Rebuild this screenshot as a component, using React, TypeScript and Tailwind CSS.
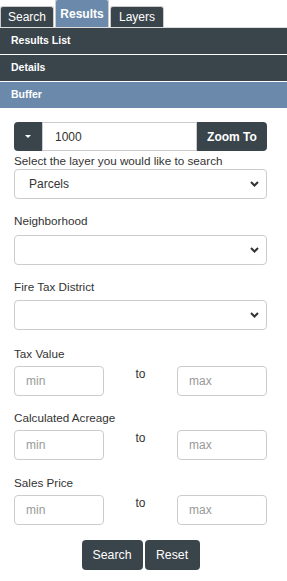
import { useState } from "react";

const DARK = "bg-[#3a444b]";

const font = { fontFamily: '"Liberation Sans", Arial, sans-serif' };

function Chevron() {
  return (
    <svg
      className="pointer-events-none absolute right-[8px] top-1/2 -translate-y-1/2"
      width="9"
      height="6"
      viewBox="0 0 9 6"
    >
      <path d="M1 1l3.5 3.5L8 1" fill="none" stroke="#333" strokeWidth="2" />
    </svg>
  );
}

function SelectBox({ value, options }: { value: string; options: string[] }) {
  return (
    <div className="relative">
      <select
        defaultValue={value}
        className="h-[30px] w-full appearance-none rounded-[4px] border border-[#ccc] bg-white pl-[14px] text-[12px] text-[#333] outline-none"
      >
        {options.map((o) => (
          <option key={o}>{o}</option>
        ))}
      </select>
      <Chevron />
    </div>
  );
}

function Label({ children }: { children: string }) {
  return <div className="h-[17px] text-[11.7px] leading-[17px] text-[#333]">{children}</div>;
}

function RangeRow({ label, className }: { label: string; className: string }) {
  return (
    <div className={className}>
      <Label>{label}</Label>
      <div className="mt-[4px] flex">
        <input
          placeholder="min"
          className="h-[30px] w-[90px] rounded-[4px] border border-[#ccc] pl-[11px] text-[12px] text-[#333] outline-none placeholder:text-[#999]"
        />
        <div className="flex-1 text-center text-[12px] leading-[17px] text-[#333]">to</div>
        <input
          placeholder="max"
          className="h-[30px] w-[90px] rounded-[4px] border border-[#ccc] pl-[11px] text-[12px] text-[#333] outline-none placeholder:text-[#999]"
        />
      </div>
    </div>
  );
}

export default function App() {
  const [tab, setTab] = useState("Results");
  const [dist, setDist] = useState("1000");

  return (
    <div className="h-[581px] w-[287px] bg-white" style={font}>
      {/* Tabs */}
      <div className="flex h-[28px] items-end gap-[1px] border-b border-[#ddd]">
        {["Search", "Results", "Layers"].map((t) => {
          const active = t === tab;
          return (
            <button
              key={t}
              type="button"
              onClick={() => setTab(t)}
              className={`flex items-center justify-center rounded-t-[3px] border border-b-0 border-[#ccc] text-[12px] text-white ${
                active ? "h-[28px] w-[54px] bg-[#6b8aab] font-bold" : `h-[21px] w-[54px] ${DARK}`
              }`}
            >
              {t}
            </button>
          );
        })}
      </div>

      {/* Accordion headers */}
      <div className={`flex h-[26px] items-center pl-[11px] text-[10.5px] font-bold text-white ${DARK}`}>Results List</div>
      <div className={`mt-px flex h-[26px] items-center pl-[11px] text-[10.5px] font-bold text-white ${DARK}`}>Details</div>
      <div className="mt-px flex h-[26px] items-center pl-[11px] text-[10.5px] font-bold text-white bg-[#6b8aab]">Buffer</div>

      <div className="pl-[14px] pr-[20px] pt-[14px]">
        {/* Buffer distance */}
        <div className="flex h-[29px]">
          <button type="button" className={`flex w-[28px] items-center justify-center rounded-l-[4px] ${DARK}`}>
            <span className="block h-0 w-0 border-x-[3px] border-t-[3px] border-x-transparent border-t-white" />
          </button>
          <input
            value={dist}
            onChange={(e) => setDist(e.target.value)}
            className="min-w-0 flex-1 border border-[#ccc] pl-[12px] text-[12px] text-[#333] outline-none"
          />
          <button type="button" className={`w-[70px] rounded-r-[4px] text-[12px] font-bold text-white ${DARK}`}>
            Zoom To
          </button>
        </div>

        <div className="mt-px">
          <Label>Select the layer you would like to search</Label>
          <SelectBox value="Parcels" options={["Parcels", "Addresses", "Streets"]} />
        </div>

        <div className="mt-[13px]">
          <Label>Neighborhood</Label>
          <div className="mt-[6px]">
            <SelectBox value="" options={[""]} />
          </div>
        </div>

        <div className="mt-[13px]">
          <Label>Fire Tax District</Label>
          <div className="mt-[5px]">
            <SelectBox value="" options={[""]} />
          </div>
        </div>

        <RangeRow label="Tax Value" className="mt-[15px]" />
        <RangeRow label="Calculated Acreage" className="mt-[13px]" />
        <RangeRow label="Sales Price" className="mt-[14px]" />

        <div className="mt-[15px] flex justify-center gap-[2px]">
          <button type="button" className={`h-[30px] w-[61px] rounded-[4px] text-[12.3px] text-white ${DARK}`}>
            Search
          </button>
          <button type="button" className={`h-[30px] w-[55px] rounded-[4px] text-[12.3px] text-white ${DARK}`}>
            Reset
          </button>
        </div>
      </div>
    </div>
  );
}
